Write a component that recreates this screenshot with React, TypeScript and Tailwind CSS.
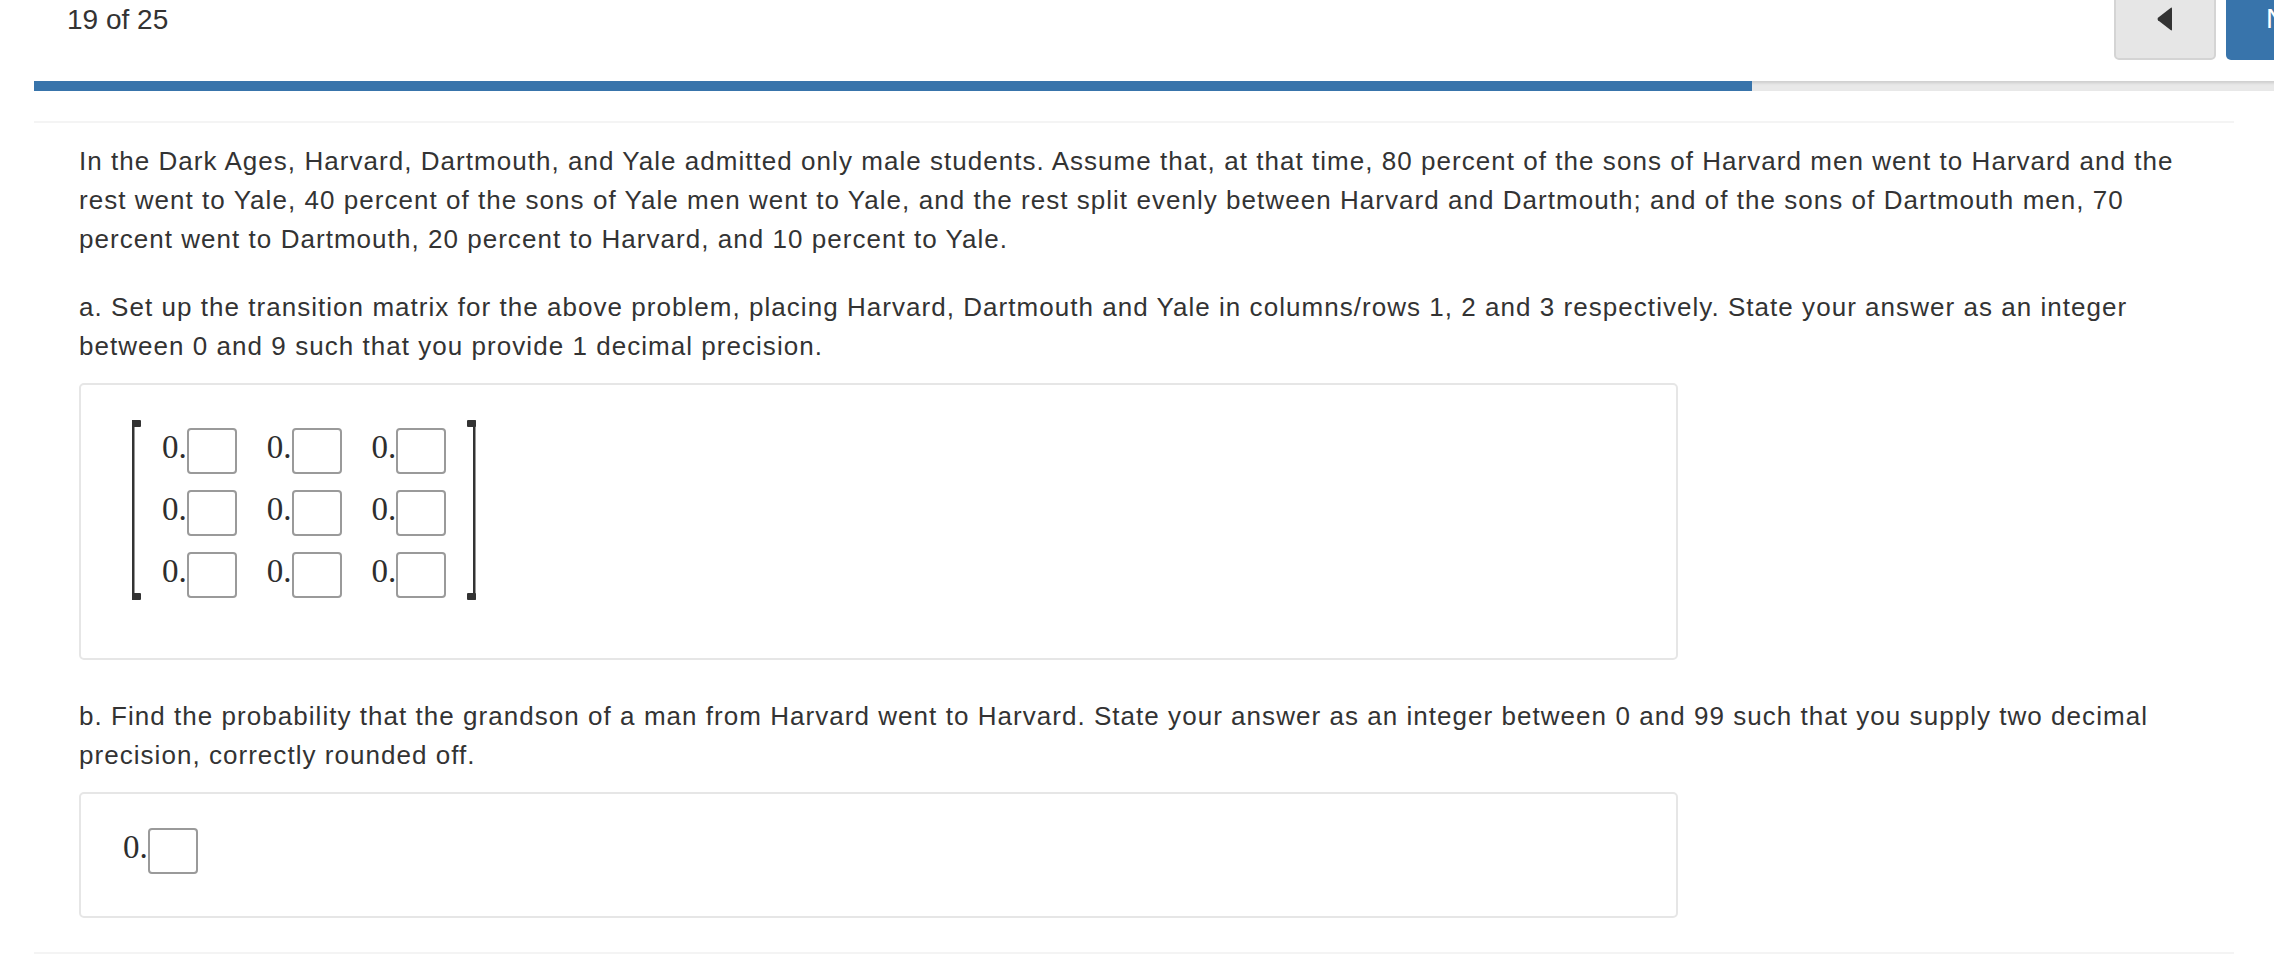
import React from "react";

const Bracket = ({ side }: { side: "left" | "right" }) => {
  const lineX = side === "left" ? 0 : 6;
  return (
    <svg width="9" height="180" viewBox="0 0 9 180" className="flex-none">
      <rect x={lineX} y="0" width="2.5" height="180" fill="#333" />
      <rect x="0" y="0" width="9" height="7" rx="1" fill="#333" />
      <rect x="0" y="173" width="9" height="7" rx="1" fill="#333" />
    </svg>
  );
};

const DecimalInput = () => {
  return (
    <div className="flex items-start">
      <span className="mt-[3px] font-['Liberation_Serif','Times_New_Roman',serif] text-[33px] leading-[33px] tracking-normal text-[#2e2e2e]">
        0.
      </span>
      <div className="h-[46px] w-[50px] rounded-[4px] border-2 border-[#9a9a9a] bg-white" />
    </div>
  );
};

const Panel = ({
  height,
  children,
}: {
  height: string;
  children: React.ReactNode;
}) => {
  return (
    <div
      className={`w-[1599px] rounded-[5px] border-2 border-[#e6e6e6] bg-white ${height}`}
    >
      {children}
    </div>
  );
};

export default function App() {
  const rows = [0, 1, 2];
  const cols = [0, 1, 2];

  return (
    <div className="min-h-screen w-full overflow-hidden bg-white font-['Liberation_Sans',Arial,sans-serif] text-[#333]">
      {/* header */}
      <div className="flex h-[60px] items-start justify-between">
        <div className="pl-[67px] pt-[2px] text-[28px] leading-[36px] text-[#333]">
          19 of 25
        </div>
        <div className="mr-[-62px] flex gap-[10px]">
          <button className="-mt-[22px] flex h-[82px] w-[102px] items-center justify-center rounded-b-[5px] border-2 border-[#d4d4d4] bg-[#e6e6e6]">
            <svg width="16" height="24" viewBox="0 0 16 24">
              <path
                d="M15 1.5 L15 22.5 Q15 24 13.6 23.1 L1 13.2 Q0 12 1 10.8 L13.6 0.9 Q15 0 15 1.5 Z"
                fill="#333"
              />
            </svg>
          </button>
          <button className="-mt-[22px] flex h-[82px] w-[110px] items-center rounded-b-[5px] bg-[#3874ab] pl-[40px] text-[28px] text-white">
            Next
          </button>
        </div>
      </div>

      {/* progress */}
      <div className="mt-[21px] ml-[34px] h-[10px] w-[2260px] bg-[#e9e9e9] shadow-[inset_0_2px_3px_rgba(0,0,0,0.12)]">
        <div className="h-full w-[1718px] bg-[#3874ab]" />
      </div>

      <div className="mt-[30px] ml-[34px] h-[2px] w-[2200px] bg-[#f4f4f4]" />

      {/* question */}
      <div className="w-[2195px] pl-[79px] text-[26px] leading-[39px] tracking-[1.04px] text-[#333]">
        <p className="mt-[19px]">
          In the Dark Ages, Harvard, Dartmouth, and Yale admitted only male
          students. Assume that, at that time, 80 percent of the sons of
          Harvard men went to Harvard and the rest went to Yale, 40 percent of
          the sons of Yale men went to Yale, and the rest split evenly between
          Harvard and Dartmouth; and of the sons of Dartmouth men, 70 percent
          went to Dartmouth, 20 percent to Harvard, and 10 percent to Yale.
        </p>

        <p className="mt-[29px]">
          a. Set up the transition matrix for the above problem, placing
          Harvard, Dartmouth and Yale in columns/rows 1, 2 and 3 respectively.
          State your answer as an integer between 0 and 9 such that you
          provide 1 decimal precision.
        </p>

        <div className="mt-[17px]">
          <Panel height="h-[277px]">
            <div className="flex items-start pt-[35px] pl-[51px]">
              <Bracket side="left" />
              <div className="ml-[21px] mt-[8px] flex flex-col gap-[16px]">
                {rows.map((r) => (
                  <div key={r} className="flex gap-[30px]">
                    {cols.map((c) => (
                      <DecimalInput key={c} />
                    ))}
                  </div>
                ))}
              </div>
              <div className="ml-[21px]">
                <Bracket side="right" />
              </div>
            </div>
          </Panel>
        </div>

        <p className="mt-[37px]">
          b. Find the probability that the grandson of a man from Harvard went
          to Harvard. State your answer as an integer between 0 and 99 such
          that you supply two decimal precision, correctly rounded off.
        </p>

        <div className="mt-[17px]">
          <Panel height="h-[126px]">
            <div className="pt-[34px] pl-[42px]">
              <DecimalInput />
            </div>
          </Panel>
        </div>
      </div>

      <div className="mt-[34px] ml-[34px] h-[2px] w-[2200px] bg-[#f4f4f4]" />
    </div>
  );
}
